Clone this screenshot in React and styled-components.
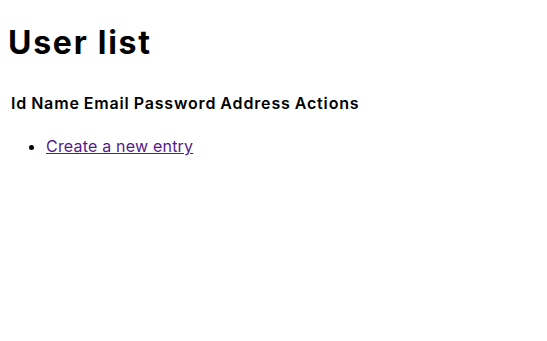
import React from 'react'
import styled, { createGlobalStyle } from 'styled-components'

const GlobalStyle = createGlobalStyle`
  body {
    margin: 8px;
    font-family: Inter, "Liberation Sans", sans-serif;
    color: #000;
    background: #fff;
  }
`

const Title = styled.h1`
  font-size: 32px;
  font-weight: bold;
  letter-spacing: 1.75px;
  margin: 15px 0 28px;
`

const Table = styled.table`
  border-spacing: 2px;
`

const HeadCell = styled.th`
  padding: 1px;
  font-weight: 600;
  letter-spacing: 0.85px;
  text-align: center;
`

const Links = styled.ul`
  margin: 20px 0;
  padding-left: 38px;
`

const EntryLink = styled.a`
  color: #551a8b;
  letter-spacing: 0.2px;
  text-decoration: underline;
`

const columns = ['Id', 'Name', 'Email', 'Password', 'Address', 'Actions']

export default function App() {
  return (
    <>
      <GlobalStyle />
      <Title>User list</Title>
      <Table>
        <thead>
          <tr>
            {columns.map((c) => (
              <HeadCell key={c}>{c}</HeadCell>
            ))}
          </tr>
        </thead>
        <tbody />
      </Table>
      <Links>
        <li>
          <EntryLink href="#">Create a new entry</EntryLink>
        </li>
      </Links>
    </>
  )
}
